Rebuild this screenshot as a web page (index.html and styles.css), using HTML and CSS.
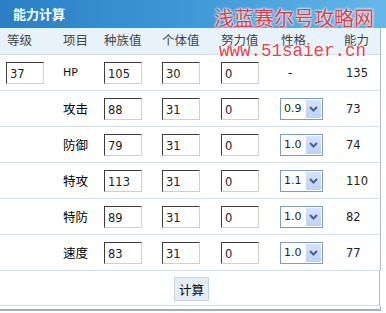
FILE: index.html
```html
<!DOCTYPE html>
<html lang="zh-CN">
<head>
<meta charset="UTF-8" />
<title>能力计算</title>
<link rel="stylesheet" href="styles.css">
</head>
<body>

<div class="calc">
  <!-- 标题栏 -->
  <div class="calc-title">能力计算</div>

  <div class="calc-head">
    <span>等级</span>
    <span>项目</span>
    <span>种族值</span>
    <span>个体值</span>
    <span>努力值</span>
    <span class="head-nature">性格</span>
    <span>能力</span>
  </div>

  <div class="calc-row">
    <input type="text" class="calc-input" value="37" />
    <span class="stat-name stat-latin">HP</span>
    <input type="text" class="calc-input" value="105" />
    <input type="text" class="calc-input" value="30" />
    <input type="text" class="calc-input" value="0" />
    <span class="nature-none">-</span>
    <span class="stat-value">135</span>
  </div>

  <div class="calc-row">
    <span></span>
    <span class="stat-name">攻击</span>
    <input type="text" class="calc-input" value="88" />
    <input type="text" class="calc-input" value="31" />
    <input type="text" class="calc-input" value="0" />
    <div class="nature-box"><select class="nature-select"><option>0.9</option><option>1.0</option><option>1.1</option></select><span class="nature-arrow"><svg width="9" height="6" viewBox="0 0 9 6"><path d="M1 1 L4.5 4.5 L8 1" fill="none" stroke="#4d6185" stroke-width="2"/></svg></span></div>
    <span class="stat-value">73</span>
  </div>

  <div class="calc-row">
    <span></span>
    <span class="stat-name">防御</span>
    <input type="text" class="calc-input" value="79" />
    <input type="text" class="calc-input" value="31" />
    <input type="text" class="calc-input" value="0" />
    <div class="nature-box"><select class="nature-select"><option>0.9</option><option selected>1.0</option><option>1.1</option></select><span class="nature-arrow"><svg width="9" height="6" viewBox="0 0 9 6"><path d="M1 1 L4.5 4.5 L8 1" fill="none" stroke="#4d6185" stroke-width="2"/></svg></span></div>
    <span class="stat-value">74</span>
  </div>

  <div class="calc-row">
    <span></span>
    <span class="stat-name">特攻</span>
    <input type="text" class="calc-input" value="113" />
    <input type="text" class="calc-input" value="31" />
    <input type="text" class="calc-input" value="0" />
    <div class="nature-box"><select class="nature-select"><option>0.9</option><option>1.0</option><option selected>1.1</option></select><span class="nature-arrow"><svg width="9" height="6" viewBox="0 0 9 6"><path d="M1 1 L4.5 4.5 L8 1" fill="none" stroke="#4d6185" stroke-width="2"/></svg></span></div>
    <span class="stat-value">110</span>
  </div>

  <div class="calc-row">
    <span></span>
    <span class="stat-name">特防</span>
    <input type="text" class="calc-input" value="89" />
    <input type="text" class="calc-input" value="31" />
    <input type="text" class="calc-input" value="0" />
    <div class="nature-box"><select class="nature-select"><option>0.9</option><option selected>1.0</option><option>1.1</option></select><span class="nature-arrow"><svg width="9" height="6" viewBox="0 0 9 6"><path d="M1 1 L4.5 4.5 L8 1" fill="none" stroke="#4d6185" stroke-width="2"/></svg></span></div>
    <span class="stat-value">82</span>
  </div>

  <div class="calc-row">
    <span></span>
    <span class="stat-name">速度</span>
    <input type="text" class="calc-input" value="83" />
    <input type="text" class="calc-input" value="31" />
    <input type="text" class="calc-input" value="0" />
    <div class="nature-box"><select class="nature-select"><option>0.9</option><option selected>1.0</option><option>1.1</option></select><span class="nature-arrow"><svg width="9" height="6" viewBox="0 0 9 6"><path d="M1 1 L4.5 4.5 L8 1" fill="none" stroke="#4d6185" stroke-width="2"/></svg></span></div>
    <span class="stat-value">77</span>
  </div>

  <div class="calc-actions">
    <button type="button" class="calc-button">计算</button>
  </div>

  <div class="calc-foot"></div>

  <!-- 水印 -->
  <div class="mark-name">浅蓝赛尔号攻略网</div>
  <div class="mark-url">www.51saier.cn</div>
</div>

</body>
</html>
```

FILE: styles.css
```css
body {
  margin: 0;
  background: #fff;
  font-family: "Noto Sans CJK SC", "DejaVu Sans", sans-serif;
  font-size: 12px;
  color: #000;
}

.calc {
  position: relative;
  width: 386px;
  height: 313px;
  overflow: hidden;
}

.calc-title {
  height: 28px;
  line-height: 27px;
  padding-left: 13px;
  background: linear-gradient(to right, #2a7fc4, #3d95d6 45%, #66b7e8);
  color: #fff;
  font-weight: bold;
  font-size: 13px;
}

.calc-head,
.calc-row {
  width: 374px;
  padding-left: 6px;
  display: grid;
  grid-template-columns: 57px 41px 58px 59px 59px 64px 1fr;
  align-items: center;
  border-right: 1px solid #a9bccd;
  border-bottom: 1px solid #d3dde6;
}

.calc-head {
  height: 26px;
  background: #e8f2fb;
  color: #444;
  font-size: 12.5px;
}

.calc-head span {
  margin-top: -3px;
}

.calc-head span:first-child {
  padding-left: 1px;
}

.head-nature {
  padding-left: 1px;
}

.calc-row {
  height: 35px;
}

.calc-input {
  width: 38px;
  height: 22px;
  box-sizing: border-box;
  padding: 2px 0 0 3px;
  border: 1px solid;
  border-color: #3c3c3c #d4d0c8 #d4d0c8 #3c3c3c;
  background: #fff;
  font-family: "DejaVu Sans", sans-serif;
  font-size: 11.5px;
  color: #222;
  outline: none;
}

.stat-name {
  font-size: 12.5px;
}

.stat-latin {
  font-family: "DejaVu Sans", sans-serif;
  font-size: 11px;
  color: #111;
}

.nature-none {
  padding-left: 8px;
  font-family: "DejaVu Sans", sans-serif;
}

.stat-value {
  padding-left: 2px;
  font-family: "DejaVu Sans", sans-serif;
  font-size: 11.5px;
  color: #222;
}

.nature-box {
  position: relative;
  width: 43px;
  height: 22px;
}

.nature-select {
  appearance: none;
  -webkit-appearance: none;
  width: 43px;
  height: 22px;
  box-sizing: border-box;
  padding: 0 0 0 3px;
  border: 1px solid #7f9db9;
  border-radius: 0;
  background: #fff;
  font-family: "DejaVu Sans", sans-serif;
  font-size: 11px;
  color: #222;
}

.nature-arrow {
  position: absolute;
  top: 2px;
  right: 2px;
  width: 15px;
  height: 18px;
  display: flex;
  align-items: center;
  justify-content: center;
  background: linear-gradient(#d6e3fc, #bcd0f7);
  pointer-events: none;
}

.calc-actions {
  width: 380px;
  height: 35px;
  display: flex;
  align-items: center;
  justify-content: center;
  padding-left: 4px;
  box-sizing: border-box;
  border-right: 1px solid #a9bccd;
  border-bottom: 1px solid #d3dde6;
}

.calc-button {
  width: 35px;
  height: 24px;
  padding: 0;
  margin-top: 2px;
  border: 1px solid #c9d3dd;
  background: #e4edf7;
  font-family: "Noto Sans CJK SC", sans-serif;
  font-size: 12.5px;
  color: #000;
}

.calc-foot {
  width: 380px;
  height: 3px;
  border-right: 1px solid #a9bccd;
  border-bottom: 2px solid #9fb2c3;
}

.mark-name {
  position: absolute;
  top: 3px;
  left: 214px;
  font-size: 20px;
  color: #d8404a;
  text-shadow: 0 0 2px #f4fbff, 0 0 2px #f4fbff, 0 0 3px #dcefff;
  white-space: nowrap;
}

.mark-url {
  position: absolute;
  top: 41px;
  left: 219px;
  font-family: "Liberation Mono", monospace;
  font-size: 17.5px;
  color: #e0454e;
  text-shadow: 0 0 2px #fff, 0 0 2px #fff, 0 0 3px #fff;
  white-space: nowrap;
}
```
